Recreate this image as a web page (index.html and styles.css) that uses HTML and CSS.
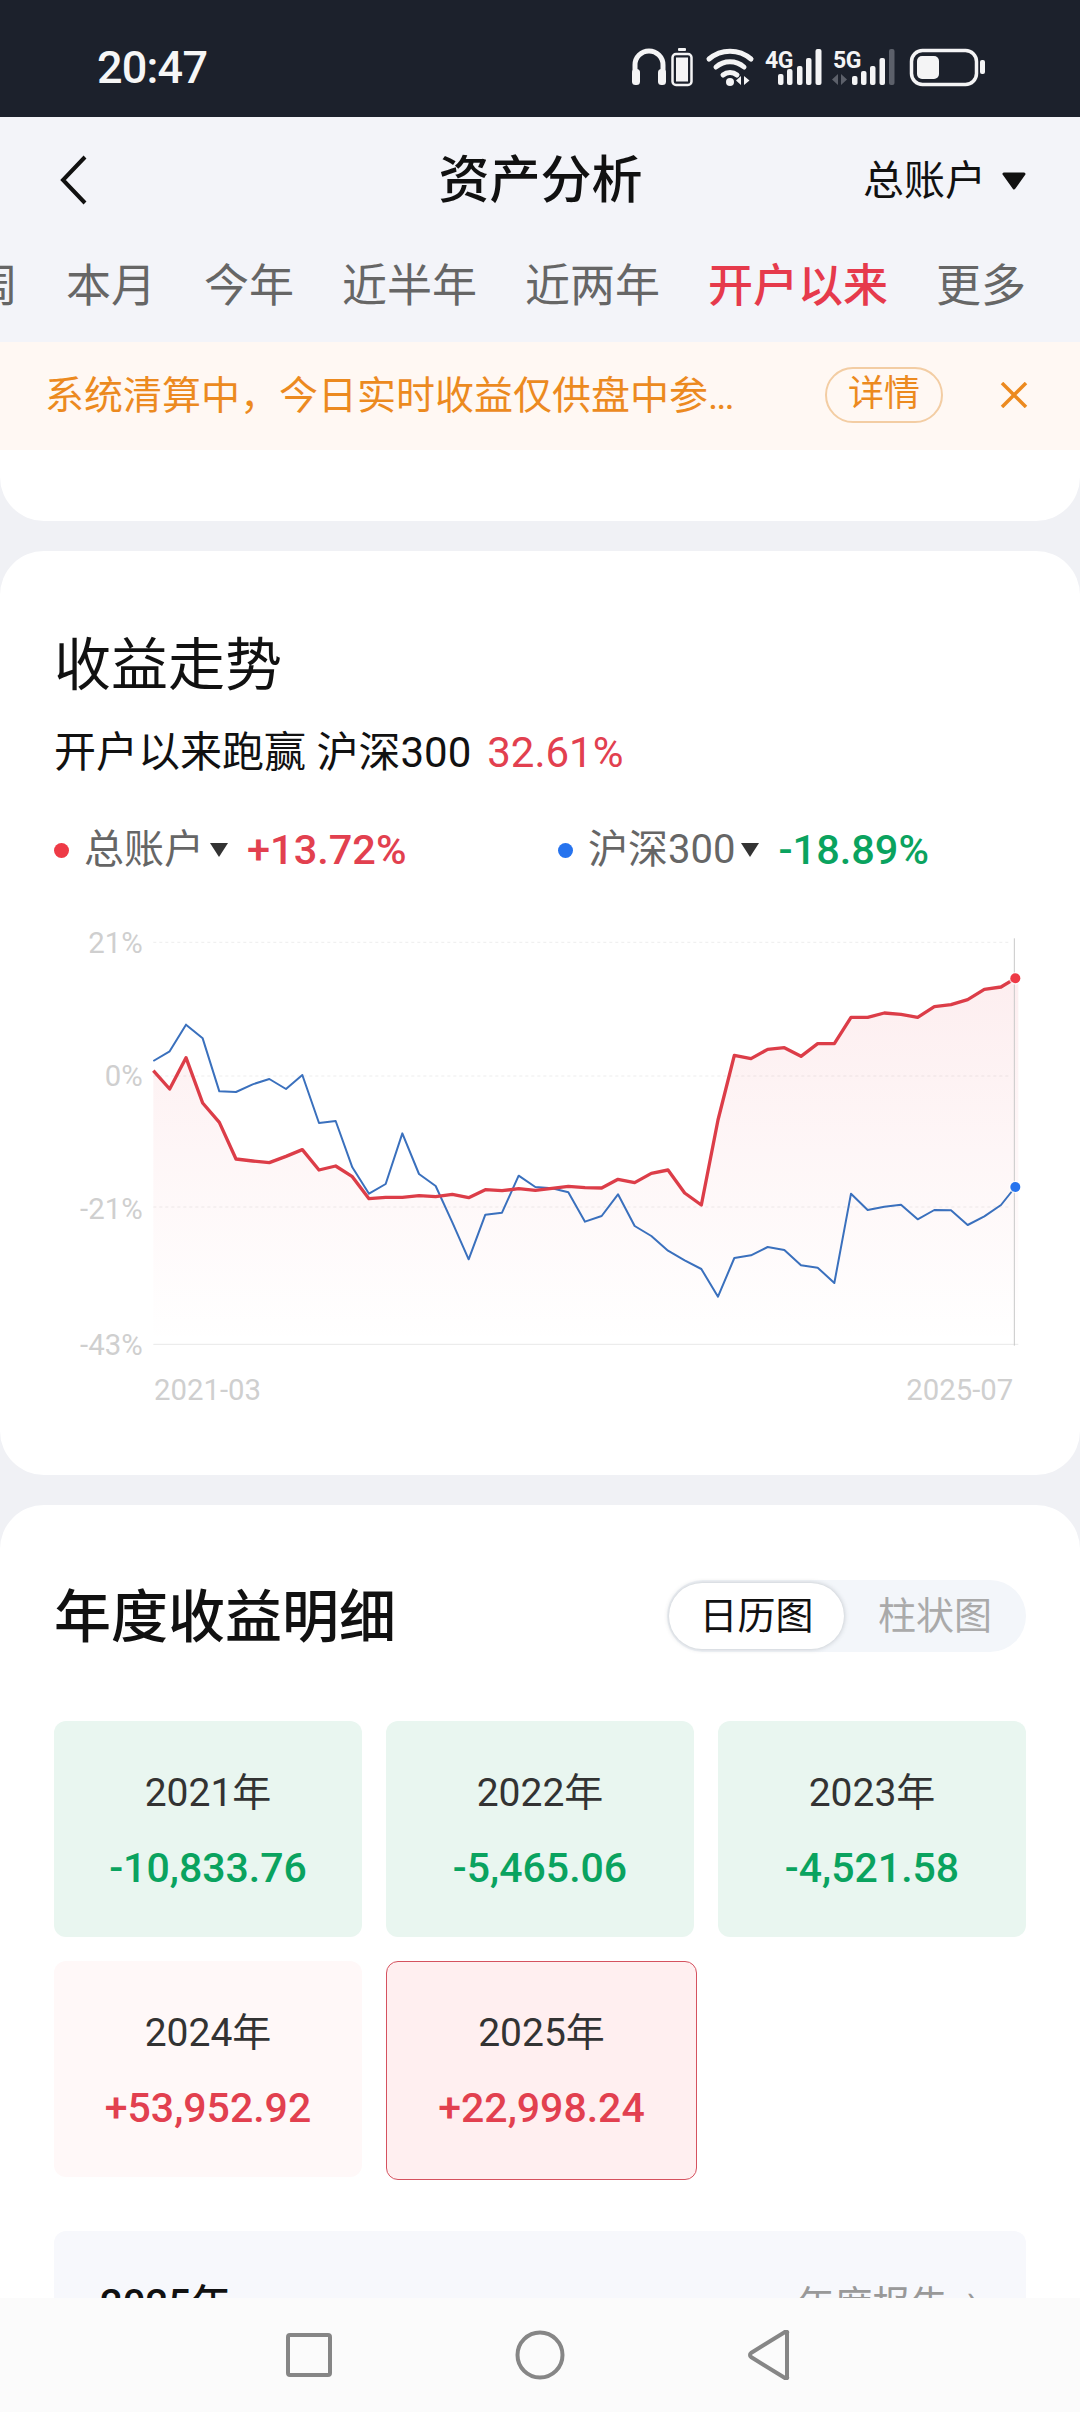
FILE: index.html
```html
<!DOCTYPE html>
<html lang="zh-CN">
<head>
<meta charset="utf-8">
<title>资产分析</title>
<link rel="stylesheet" href="styles.css">
</head>
<body>
<div class="phone">
  <div class="status">
    <span class="clock">20:47</span>
    <svg class="status-icons" width="360" height="40" viewBox="630 47 360 40">
      <g fill="none" stroke="#f4f4f5">
        <path d="M635 72V65a14 14 0 0 1 28 0v7" stroke-width="5"/>
        <rect x="672.5" y="54" width="19" height="31" rx="3.5" stroke-width="2.5"/>
        <path d="M709 59a32 32 0 0 1 42 0" stroke-width="5" stroke-linecap="round"/>
        <path d="M716 67a21 21 0 0 1 28 0" stroke-width="5" stroke-linecap="round"/>
        <path d="M723 75a11 11 0 0 1 14 0" stroke-width="5" stroke-linecap="round"/>
        <rect x="911.5" y="50.5" width="65" height="34" rx="11" stroke-width="3.5"/>
      </g>
      <g fill="#f4f4f5">
        <rect x="632" y="69" width="8" height="16" rx="3.5"/>
        <rect x="658" y="69" width="8" height="16" rx="3.5"/>
        <rect x="678" y="48" width="8" height="3" rx="1"/>
        <rect x="676" y="57.500" width="12" height="24"/>
        <circle cx="730" cy="82" r="4"/>
        <path d="M741 76v9l-5-4.500zM744 76l5.500 4.500-5.500 4.500z"/>
        <rect x="778" y="74" width="5.500" height="11" rx="2"/>
        <rect x="787" y="69" width="5.500" height="16" rx="2"/>
        <rect x="797" y="66" width="5.500" height="19" rx="2"/>
        <rect x="806" y="58" width="5.500" height="27" rx="2"/>
        <rect x="815.500" y="49" width="6" height="36" rx="2"/>
        <rect x="852" y="76" width="5.500" height="9" rx="2"/>
        <rect x="861" y="71" width="5.500" height="14" rx="2"/>
        <rect x="870" y="66" width="5.500" height="19" rx="2"/>
        <rect x="879.500" y="58" width="5.500" height="27" rx="2"/>
        <rect x="917" y="56" width="22" height="23" rx="5"/>
        <rect x="980" y="60" width="5" height="14" rx="2"/>
        <text class="net" x="765" y="67.500">4G</text>
        <text class="net" x="833" y="67.500">5G</text>
      </g>
      <g fill="#5c606a">
        <rect x="889" y="49" width="5.500" height="36" rx="2"/>
        <path d="M838 74v11l-6-5.500zM841 74l6 5.500-6 5.500z"/>
      </g>
    </svg>
  </div>

  <header class="top">
    <div class="titlebar">
      <svg class="back" width="32" height="52" viewBox="0 0 32 52"><path d="M27 3 5 26l22 23" fill="none" stroke="#111" stroke-width="4"/></svg>
      <h1 class="page-title">资产分析</h1>
      <div class="account">总账户<svg class="account-caret" width="24" height="18" viewBox="0 0 24 18"><path d="M2 2h20L12 16z" fill="#111" stroke="#111" stroke-width="3" stroke-linejoin="round"/></svg></div>
    </div>
    <nav class="tabs">
      <span class="tab">本周</span>
      <span class="tab">本月</span>
      <span class="tab">今年</span>
      <span class="tab">近半年</span>
      <span class="tab">近两年</span>
      <span class="tab tab-active">开户以来</span>
      <span class="tab">更多</span>
    </nav>
  </header>

  <div class="notice">
    <span class="notice-text">系统清算中，今日实时收益仅供盘中参<span class="dots">...</span></span>
    <span class="notice-btn">详情</span>
    <svg class="notice-close" width="28" height="26" viewBox="0 0 28 26"><path d="M2 1l24 24M26 1 2 25" fill="none" stroke="#ec8a1f" stroke-width="3.500"/></svg>
  </div>

  <main class="scroll">
    <div class="card card-stub"></div>

    <section class="card card-trend">
      <h2 class="card-title">收益走势</h2>
      <p class="beat">开户以来跑赢 沪深300<span class="beat-num">32.61%</span></p>
      <div class="legend">
        <div class="legend-item">
          <i class="dot dot-red"></i><span class="legend-name">总账户</span>
          <svg class="legend-caret" width="18" height="14" viewBox="0 0 18 14"><path d="M0 0h18L9 14z" fill="#333"/></svg>
          <span class="legend-val up">+13.72%</span>
        </div>
        <div class="legend-item">
          <i class="dot dot-blue"></i><span class="legend-name">沪深300</span>
          <svg class="legend-caret" width="18" height="14" viewBox="0 0 18 14"><path d="M0 0h18L9 14z" fill="#333"/></svg>
          <span class="legend-val down">-18.89%</span>
        </div>
      </div>
      <svg class="chart" width="1080" height="500" viewBox="-180 0 3240 1500">
        <defs>
          <linearGradient id="area" x1="0" y1="0" x2="0" y2="1">
            <stop offset="0" stop-color="#e8394a" stop-opacity=".085"/>
            <stop offset="1" stop-color="#e8394a" stop-opacity="0"/>
          </linearGradient>
        </defs>
        <g stroke="#e9e9e9" stroke-width="2.500" stroke-dasharray="9 9">
          <path d="M280 67H2845"/>
          <path d="M280 468H2845"/>
          <path d="M280 861H2845"/>
        </g>
        <path d="M280 1273H2875" stroke="#e8e8e8" stroke-width="3"/>
        <polygon fill="url(#area)" points="280,452 329,507 378,413 428,549 478,607 528,717 578,723 628,728 678,709 727,689 777,750 827,738 877,770 927,836 977,832 1027,832 1077,827 1127,830 1177,823 1226,833 1276,809 1326,812 1376,806 1426,811 1476,805 1525,799 1575,803 1625,804 1674,778 1724,788 1774,760 1824,750 1874,819 1924,855 1974,600 2023,406 2073,416 2123,388 2173,383 2223,409 2273,371 2323,371 2373,292 2423,292 2473,279 2523,283 2573,292 2623,260 2673,254 2723,239 2773,208 2823,201 2875,175 2875,1273 280,1273"/>
        <path d="M2863 55V1277" stroke="#c8c8c8" stroke-width="3"/>
        <polyline fill="none" stroke="#3a70bd" stroke-width="6" stroke-linejoin="round" points="280,423 329,394 378,314 428,355 478,514 528,516 578,493 628,477 678,507 727,465 777,609 827,603 877,742 927,821 977,792 1027,640 1077,762 1127,798 1177,907 1226,1018 1276,884 1326,878 1376,767 1426,801 1476,805 1525,817 1575,905 1625,888 1674,823 1724,918 1774,948 1824,992 1874,1021 1924,1047 1974,1130 2023,1014 2073,1006 2123,981 2173,990 2223,1036 2273,1043 2323,1089 2373,821 2423,870 2473,860 2523,854 2573,898 2623,870 2673,871 2723,915 2773,889 2823,855 2866,801"/>
        <polyline fill="none" stroke="#dc3d48" stroke-width="10" stroke-linejoin="round" points="280,452 329,507 378,413 428,549 478,607 528,717 578,723 628,728 678,709 727,689 777,750 827,738 877,770 927,836 977,832 1027,832 1077,827 1127,830 1177,823 1226,833 1276,809 1326,812 1376,806 1426,811 1476,805 1525,799 1575,803 1625,804 1674,778 1724,788 1774,760 1824,750 1874,819 1924,855 1974,600 2023,406 2073,416 2123,388 2173,383 2223,409 2273,371 2323,371 2373,292 2423,292 2473,279 2523,283 2573,292 2623,260 2673,254 2723,239 2773,208 2823,201 2866,175"/>
        <circle cx="2866" cy="175" r="19" fill="#fff" opacity=".7"/>
        <circle cx="2866" cy="175" r="15" fill="#ee3a46"/>
        <circle cx="2866" cy="801" r="19" fill="#fff" opacity=".7"/>
        <circle cx="2866" cy="801" r="15" fill="#2673ee"/>
        <g class="axis">
          <text x="248" y="98" text-anchor="end">21%</text>
          <text x="248" y="498" text-anchor="end">0%</text>
          <text x="248" y="896" text-anchor="end">-21%</text>
          <text x="248" y="1304" text-anchor="end">-43%</text>
          <text x="282" y="1440">2021-03</text>
          <text x="2860" y="1440" text-anchor="end">2025-07</text>
        </g>
      </svg>
    </section>

    <section class="card card-year">
      <div class="year-head">
        <h2 class="card-title card-title-strong">年度收益明细</h2>
        <div class="toggle">
          <span class="toggle-on">日历图</span>
          <span class="toggle-off">柱状图</span>
        </div>
      </div>
      <div class="year-grid">
        <div class="cell cell-loss"><span class="cell-year">2021年</span><span class="cell-num down">-10,833.76</span></div>
        <div class="cell cell-loss"><span class="cell-year">2022年</span><span class="cell-num down">-5,465.06</span></div>
        <div class="cell cell-loss"><span class="cell-year">2023年</span><span class="cell-num down">-4,521.58</span></div>
        <div class="cell cell-gain"><span class="cell-year">2024年</span><span class="cell-num up">+53,952.92</span></div>
        <div class="cell cell-selected"><span class="cell-year">2025年</span><span class="cell-num up">+22,998.24</span></div>
      </div>
      <div class="detail">
        <span class="detail-year">2025年</span>
        <span class="detail-link">年度报告<span class="detail-arrow">›</span></span>
      </div>
    </section>
  </main>

  <footer class="navbar">
    <svg width="46" height="44" viewBox="0 0 46 44"><rect x="2" y="2" width="42" height="40" rx="2" fill="none" stroke="#868686" stroke-width="4"/></svg>
    <svg width="50" height="50" viewBox="0 0 50 50"><circle cx="25" cy="25" r="22.500" fill="none" stroke="#868686" stroke-width="4"/></svg>
    <svg width="42" height="50" viewBox="0 0 42 50"><path d="M39 3v44a1 1 0 0 1-2 1L3 27a2.500 2.500 0 0 1 0-4L37 2a1 1 0 0 1 2 1z" fill="none" stroke="#868686" stroke-width="4" stroke-linejoin="round"/></svg>
  </footer>
</div>
</body>
</html>
```

FILE: styles.css
```css
* { box-sizing: border-box; }
html, body { margin: 0; padding: 0; }
body {
  width: 1080px;
  height: 2412px;
  font-family: Roboto, "Noto Sans CJK SC", sans-serif;
  color: #111;
  background: #f0f1f5;
}
h1, h2, p { margin: 0; font-weight: 400; }

.phone {
  width: 1080px;
  height: 2412px;
  display: flex;
  flex-direction: column;
  overflow: hidden;
}

/* status bar */
.status {
  flex: 0 0 117px;
  background: #1c212c;
  display: flex;
  align-items: flex-start;
  padding: 47px 90px 0 97px;
}
.clock {
  color: #f6f6f6;
  font-size: 45px;
  line-height: 46px;
  font-weight: 500;
  letter-spacing: -.8px;
  margin-top: -2px;
}
.status-icons { margin-left: auto; display: block; }
.net {
  font-family: Roboto, sans-serif;
  font-size: 23px;
  font-weight: 700;
  letter-spacing: -.5px;
}

/* header */
.top { flex: 0 0 225px; background: #f3f4f9; }
.titlebar {
  height: 125px;
  display: grid;
  grid-template-columns: 1fr auto 1fr;
  align-items: center;
  padding: 3px 54px 0 58px;
}
.back { display: block; margin-top: -3px; }
.page-title { font-size: 51px; line-height: 60px; font-weight: 500; margin-left: -3px; }
.account {
  justify-self: end;
  display: flex;
  align-items: center;
  font-size: 41px;
  line-height: 50px;
  gap: 16px;
}
.tabs {
  display: flex;
  gap: 48px;
  margin-left: -72px;
  height: 86px;
  padding-top: 3px;
  align-items: center;
  white-space: nowrap;
}
.tab { font-size: 45px; line-height: 56px; color: #666; }
.tab-active { color: #e63a4c; font-weight: 500; }

/* notice */
.notice {
  flex: 0 0 108px;
  background: #fff8f3;
  display: flex;
  align-items: center;
  padding-left: 45px;
  color: #ec8a1f;
}
.notice-text { font-size: 39px; line-height: 50px; width: 780px; white-space: nowrap; }
.dots { letter-spacing: -2px; }
.notice-btn {
  width: 118px;
  height: 56px;
  margin-top: -2px;
  border: 2px solid #f3cda3;
  border-radius: 28px;
  font-size: 36px;
  line-height: 50px;
  text-align: center;
}
.notice-close { margin-left: 57px; margin-top: -2px; }

/* content */
.scroll {
  flex: 1 1 auto;
  min-height: 0;
  overflow: hidden;
  display: flex;
  flex-direction: column;
  gap: 30px;
}
.card { background: #fff; border-radius: 44px; flex: 0 0 auto; }
.card-stub { height: 71px; border-radius: 0 0 44px 44px; }
.card-trend { height: 924px; padding-top: 87px; }
.card-title { font-size: 57px; line-height: 56px; padding-left: 54px; font-weight: 400; }
.card-title-strong { font-weight: 500; padding: 3px 0 0; }

.beat { font-size: 42px; line-height: 50px; margin-top: 34px; padding-left: 54px; }
.beat-num { color: #e2404f; margin-left: 16px; }

.legend { display: flex; margin-top: 47px; padding-left: 54px; height: 50px; }
.legend-item { width: 504px; display: flex; align-items: center; }
.dot { width: 15px; height: 15px; border-radius: 50%; margin-right: 15px; }
.dot-red { background: #ee3a46; }
.dot-blue { background: #2673ee; }
.legend-name { font-size: 40px; line-height: 50px; color: #666; }
.legend-caret { margin-left: 6px; }
.legend-val { font-size: 41.500px; line-height: 50px; font-weight: 500; margin-left: 19px; }
.up { color: #e2404f; }
.down { color: #0aa35f; }

.chart { display: block; margin-top: 45px; }
.axis text {
  font-family: Roboto, sans-serif;
  font-size: 88px;
  fill: #cfcfcf;
}

/* yearly */
.card-year { height: 1000px; padding: 75px 54px 0; }
.year-head { display: flex; justify-content: space-between; align-items: center; height: 72px; }
.toggle {
  width: 359px;
  height: 72px;
  border-radius: 36px;
  background: #f3f6fa;
  display: flex;
  align-items: center;
  padding-left: 2px;
}
.toggle-on {
  width: 175px;
  height: 66px;
  border-radius: 33px;
  background: #fff;
  box-shadow: 0 0 5px rgba(60, 70, 80, .3);
  font-size: 38px;
  line-height: 66px;
  text-align: center;
}
.toggle-off { flex: 1; font-size: 38px; line-height: 66px; text-align: center; color: #aaa; }

.year-grid {
  display: grid;
  grid-template-columns: repeat(3, 308px);
  grid-auto-rows: 216px;
  gap: 24px;
  margin-top: 69px;
}
.cell {
  border-radius: 12px;
  display: flex;
  flex-direction: column;
  align-items: center;
  padding-top: 50px;
}
.cell-loss { background: #e9f6f0; }
.cell-gain { background: #fff8f8; }
.cell-selected {
  background: #ffeff0;
  border: 1.500px solid #d5525f;
  margin: 0 -3px -3px 0;
  padding-top: 48.500px;
}
.cell-year { font-size: 39px; line-height: 44px; color: #333; }
.cell-num { font-size: 41px; line-height: 44px; font-weight: 500; margin-top: 31px; }

.detail {
  margin-top: 54px;
  height: 300px;
  background: #f7f8fc;
  border-radius: 12px;
  display: flex;
  justify-content: space-between;
  padding: 52px 48px 0 46px;
}
.detail-year { font-size: 40px; line-height: 44px; font-weight: 500; }
.detail-link { font-size: 38px; line-height: 44px; color: #999; }
.detail-arrow { display: inline-block; margin-left: 18px; transform: translateY(-6px); }

/* navigation bar */
.navbar {
  flex: 0 0 114px;
  background: #fbfbfb;
  display: flex;
  align-items: center;
  padding: 0 0 0 286px;
  gap: 183px;
}
```
